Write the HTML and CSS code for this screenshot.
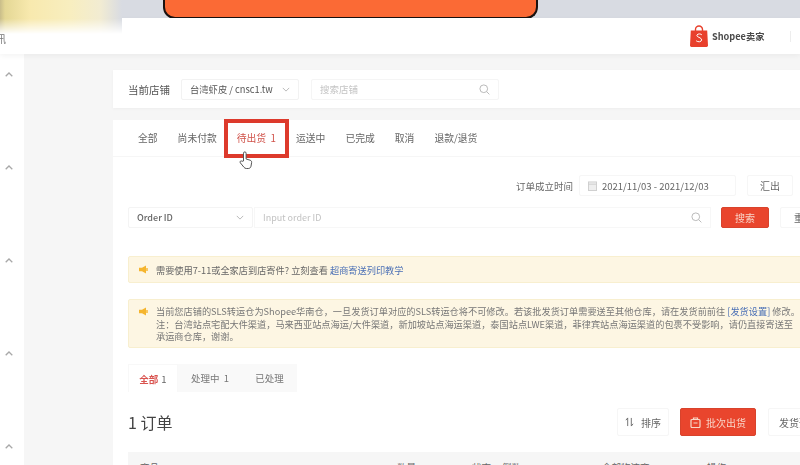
FILE: index.html
```html
<!DOCTYPE html>
<html lang="zh">
<head>
<meta charset="utf-8">
<title>Shopee卖家</title>
<link rel="stylesheet" href="styles.css">
</head>
<body>
<div class="page">
  <div class="top-strip"><div class="pill"></div></div>
  <div class="glow"></div>
  <header class="header">
    <span class="cut-label">讯</span>
    <div class="brand">
      <svg class="bag" viewBox="0 0 18 22"><path d="M5.500 6V4.500a3.500 3.500 0 0 1 7 0V6" fill="none" stroke="#e8402c" stroke-width="1.400"/><path d="M.8 5.500h16.400l.8 15a1.400 1.400 0 0 1-1.400 1.500H1.400A1.400 1.400 0 0 1 0 20.500z" fill="#e8402c"/><path d="M11.800 9.800C11 8.900 8 8.300 7 10c-1 2.300 4.800 2.300 4.600 5-.2 2.100-3.600 2.300-5.400.8" fill="none" stroke="#fff" stroke-width="1"/></svg>
      <span class="brand-name">Shopee卖家</span>
    </div>
    <span class="head-divider"></span>
  </header>
  <div class="body-row">
    <aside class="sidebar">
      <svg class="chev" viewBox="0 0 8 5"><path d="M.7 4.200 4 1l3.300 3.200" fill="none" stroke="#a8a8a8" stroke-width="1.300"/></svg>
      <svg class="chev" viewBox="0 0 8 5"><path d="M.7 4.200 4 1l3.300 3.200" fill="none" stroke="#a8a8a8" stroke-width="1.300"/></svg>
      <svg class="chev" viewBox="0 0 8 5"><path d="M.7 4.200 4 1l3.300 3.200" fill="none" stroke="#a8a8a8" stroke-width="1.300"/></svg>
      <svg class="chev" viewBox="0 0 8 5"><path d="M.7 4.200 4 1l3.300 3.200" fill="none" stroke="#a8a8a8" stroke-width="1.300"/></svg>
      <svg class="chev" viewBox="0 0 8 5"><path d="M.7 4.200 4 1l3.300 3.200" fill="none" stroke="#a8a8a8" stroke-width="1.300"/></svg>
    </aside>
    <main class="content">
      <section class="shop-card">
        <span class="shop-label">当前店铺</span>
        <div class="shop-select"><span>台湾虾皮 / cnsc1.tw</span>
          <svg class="caret" viewBox="0 0 10 6"><path d="M1 1l4 4 4-4" fill="none" stroke="#aaa" stroke-width="1"/></svg></div>
        <div class="shop-search"><span>搜索店铺</span>
          <svg class="search" viewBox="0 0 12 12"><circle cx="5.200" cy="5.200" r="4.200" fill="none" stroke="#b5b5b5" stroke-width="1"/><path d="M8.300 8.300l3 3" stroke="#b5b5b5" stroke-width="1"/></svg></div>
      </section>
      <section class="orders-card">
        <nav class="tabs">
          <span class="tab">全部</span>
          <span class="tab">尚未付款</span>
          <span class="tab tab-active">待出货&nbsp; 1</span>
          <span class="tab">运送中</span>
          <span class="tab">已完成</span>
          <span class="tab">取消</span>
          <span class="tab">退款/退货</span>
        </nav>
        <div class="date-row">
          <span class="date-label">订单成立时间</span>
          <div class="date-box">
            <svg class="cal" viewBox="0 0 10 11"><rect x=".5" y="1" width="9" height="9.500" fill="#eee" stroke="#ccc"/><path d="M.5 3.500h9" stroke="#ccc"/></svg>
            <span>2021/11/03 - 2021/12/03</span>
          </div>
          <button class="btn btn-export">汇出</button>
        </div>
        <div class="filter-row">
          <div class="id-select"><span>Order ID</span>
            <svg class="caret" viewBox="0 0 10 6"><path d="M1 1l4 4 4-4" fill="none" stroke="#aaa" stroke-width="1"/></svg></div>
          <div class="id-input"><span>Input order ID</span>
            <svg class="search" viewBox="0 0 12 12"><circle cx="5.200" cy="5.200" r="4.200" fill="none" stroke="#b5b5b5" stroke-width="1"/><path d="M8.300 8.300l3 3" stroke="#b5b5b5" stroke-width="1"/></svg></div>
          <button class="btn btn-primary btn-search">搜索</button>
          <button class="btn btn-reset">重置</button>
        </div>
        <div class="notice notice-short">
          <svg class="horn" viewBox="0 0 10 9"><path d="M0 2.800h3L7 .5v8L3 6.200H0z" fill="#f5b52e"/><path d="M8 3v3" stroke="#f5b52e" stroke-width="1.400"/></svg>
          <p>需要使用7-11或全家店到店寄件? 立刻查看 <a class="link">超商寄送列印教学</a></p>
        </div>
        <div class="notice notice-long">
          <svg class="horn" viewBox="0 0 10 9"><path d="M0 2.800h3L7 .5v8L3 6.200H0z" fill="#f5b52e"/><path d="M8 3v3" stroke="#f5b52e" stroke-width="1.400"/></svg>
          <p>当前您店铺的SLS转运仓为Shopee华南仓，一旦发货订单对应的SLS转运仓将不可修改。若该批发货订单需要送至其他仓库，请在发货前前往 <a class="link">[发货设置]</a> 修改。<br>注：台湾站点宅配大件渠道，马来西亚站点海运/大件渠道，新加坡站点海运渠道，泰国站点LWE渠道，菲律宾站点海运渠道的包裹不受影响，请仍直接寄送至<br>承运商仓库，谢谢。</p>
        </div>
        <div class="subtabs">
          <span class="subtab subtab-active"><b>全部</b> 1</span>
          <span class="subtab">处理中&nbsp; 1</span>
          <span class="subtab">已处理</span>
        </div>
        <div class="list-head">
          <h2 class="list-title">1 订单</h2>
          <button class="btn btn-sort">
            <svg class="sort" viewBox="0 0 10 11"><path d="M3 10V1L1 3.500M7 1v9l2-2.500" fill="none" stroke="#666" stroke-width="1"/></svg>排序</button>
          <button class="btn btn-primary btn-batch">
            <svg class="box" viewBox="0 0 11 11"><rect x="1" y="2.500" width="9" height="8" rx="1" fill="none" stroke="#f8d9c8" stroke-width="1.200"/><path d="M3.500 2.500V1h4v1.500M3.500 6h4" stroke="#f8d9c8" stroke-width="1.200" fill="none"/></svg>批次出货</button>
          <button class="btn btn-pre">发货预报</button>
        </div>
        <div class="table-head">
          <span class="th th-goods">商品</span>
          <span class="th th-qty">数量</span>
          <span class="th th-status">状态</span>
          <span class="th th-count">倒数</span>
          <span class="th th-carrier">全部物流商 ⌄</span>
          <span class="th th-op">操作</span>
        </div>
      </section>
    </main>
  </div>
  <div class="highlight"></div>
  <svg class="hand" viewBox="0 0 14 19"><path d="M4.500 10V2.200a1.300 1.300 0 0 1 2.600 0V8l4 1.200c1.200.4 1.700 1.300 1.500 2.500l-.6 3.500c-.2 1.300-1.200 2.300-2.700 2.300H7.300c-1 0-1.800-.5-2.400-1.300L1.300 11.800c-.9-1.300.7-2.600 1.800-1.500z" fill="#fff" stroke="#555" stroke-width="1"/></svg>
</div>
</body>
</html>
```
FILE: styles.css
```css
* { box-sizing: border-box; }
html, body { margin: 0; height: 100%; overflow: hidden; background: #f6f6f6; }
body { font-family: "Noto Sans CJK SC", "Liberation Sans", sans-serif; font-size: 10px; color: #666; }
.page { position: relative; width: 800px; height: 465px; overflow: hidden; filter: blur(.7px); }

.top-strip { height: 18px; background: #d8dbe2; display: flex; padding-left: 163px; }
.pill { width: 375px; height: 19px; background: #fb6a35; border: 2px solid #1a1210; border-top: 0; border-radius: 0 0 12px 12px; }
.glow { position: absolute; left: 0; top: 0; width: 122px; height: 34px;
  background: linear-gradient(90deg, #c9bd8a 0, #e4d795 5px, #f8e9ae 30px, #f8eebf 70px, #f2ecd2 100px, #d8dbe2 122px);
  -webkit-mask-image: linear-gradient(180deg, #000 55%, transparent); mask-image: linear-gradient(180deg, #000 55%, transparent); z-index: 2; }

.header { height: 36px; background: #fff; display: flex; align-items: center; justify-content: flex-end; padding-right: 9px; position: relative; box-shadow: 0 2px 6px rgba(0,0,0,.05); z-index: 1; }
.cut-label { margin-right: auto; margin-left: -4px; margin-top: 4px; font-size: 10px; color: #777; }
.brand { display: flex; align-items: center; gap: 4px; }
.bag { width: 18px; height: 22px; }
.brand-name { font-size: 9.200px; font-weight: 700; color: #4a4a4a; width: 52px; white-space: nowrap; }
.head-divider { width: 1px; height: 11px; background: #ededed; margin-left: 26px; }

.body-row { display: flex; height: 411px; }
.sidebar { width: 24px; flex: none; background: #fff; display: flex; flex-direction: column; align-items: center; gap: 88px; padding: 18px 6px 0 0; }
.chev { width: 8px; height: 5px; flex: none; }
.content { width: 776px; flex: none; padding: 16px 0 0 89px; }

.shop-card { height: 38px; background: #fff; display: flex; align-items: center; padding-left: 15px; box-shadow: 0 1px 3px rgba(0,0,0,.04); width: 760px; }
.shop-label { font-size: 10.500px; color: #555; width: 53px; }
.shop-select { width: 118px; height: 21px; border: 1px solid #f2f2f2; border-radius: 2px; display: flex; align-items: center; justify-content: space-between; padding: 0 8px; font-size: 9.300px; color: #555; white-space: nowrap; }
.shop-search { width: 188px; height: 21px; margin-left: 12px; border: 1px solid #f5f5f5; border-radius: 2px; display: flex; align-items: center; justify-content: space-between; padding: 0 8px; color: #c4c4c4; font-size: 9.500px; }
.caret { width: 8px; height: 5px; }
.search { width: 11px; height: 11px; flex: none; }

.orders-card { margin-top: 12px; width: 760px; height: 345px; background: #fff; }
.tabs { height: 37px; display: flex; align-items: center; gap: 20px; padding-left: 25px; border-bottom: 1px solid #f6f6f6; }
.tab { font-size: 9.800px; color: #666; white-space: nowrap; }
.tab-active { color: #d0524a; }

.date-row { display: flex; align-items: center; margin-top: 18px; padding-left: 403px; height: 21px; }
.date-label { width: 63px; font-size: 9.500px; color: #666; white-space: nowrap; }
.date-box { width: 157px; height: 21px; border: 1px solid #f6f6f6; border-radius: 2px; display: flex; align-items: center; gap: 5px; padding-left: 8px; font-size: 9.500px; color: #666; white-space: nowrap; }
.cal { width: 9px; height: 10px; }
.btn { font: inherit; font-size: 10px; border: 1px solid #f6f6f6; border-radius: 2px; background: #fff; color: #666; padding: 0; height: 21px; white-space: nowrap; display: flex; align-items: center; justify-content: center; }
.btn-export { width: 46px; margin-left: 11px; }
.filter-row { display: flex; align-items: center; margin-top: 11px; padding-left: 15px; height: 21px; }
.id-select { width: 125px; height: 21px; border: 1px solid #f4f4f4; border-radius: 2px; display: flex; align-items: center; justify-content: space-between; padding: 0 8px; font-size: 9px; font-weight: 500; color: #666; }
.id-input { width: 457px; height: 21px; margin-left: 1px; border: 1px solid #f7f7f7; display: flex; align-items: center; justify-content: space-between; padding: 0 8px; color: #c2c2c2; font-size: 9px; }
.btn-primary { background: #e9452d; border-color: #d8432c; color: #f8d3c6; }
.btn-search { width: 48px; margin-left: 10px; }
.btn-reset { width: 48px; margin-left: 11px; justify-content: flex-start; padding-left: 13px; }

.notice { margin: 0 0 0 15px; width: 720px; background: #fdf6e3; border: 1px solid #f8efcf; border-radius: 2px; display: flex; align-items: flex-start; padding-left: 10px; color: #666; }
.notice p { margin: 0; white-space: nowrap; font-size: 9.200px; }
.horn { width: 10px; height: 9px; flex: none; margin-right: 7px; }
.link { color: #4a6fb5; }
.notice-short { margin-top: 28px; height: 27px; align-items: center; }
.notice-long { margin-top: 16px; height: 49px; padding-top: 5px; }
.notice-long p { line-height: 12.500px; font-size: 9.200px; color: #777; }
.notice-long .horn { margin-top: 2px; }

.subtabs { display: flex; margin: 16px 0 0 15px; height: 28px; }
.subtab { display: flex; align-items: center; justify-content: center; gap: 3px; width: 64px; background: #f9f9f9; font-size: 9.500px; color: #777; }
.subtab-active { width: 50px; background: #fff; border: 1px solid #f8f8f8; border-bottom: 0; color: #666; }
.subtab-active b { color: #d9534f; font-weight: 700; }
.subtab:last-child { width: 55px; }

.list-head { display: flex; align-items: center; margin-top: 16px; padding-left: 15px; height: 28px; }
.list-title { margin: 0; font-size: 16px; line-height: 28px; font-weight: 400; color: #444; width: 489px; }
.btn-sort { width: 52px; height: 28px; gap: 7px; }
.sort { width: 9px; height: 10px; }
.btn-batch { width: 76px; height: 28px; margin-left: 11px; gap: 5px; }
.box { width: 11px; height: 11px; }
.btn-pre { width: 70px; height: 28px; margin-left: 12px; justify-content: flex-start; padding-left: 10px; }

.table-head { margin: 16px 0 0 15px; height: 30px; background: #f6f6f6; position: relative; display: flex; padding-top: 8px; font-size: 9.500px; color: #666; }
.th { white-space: nowrap; }
.th-goods { margin-left: 12px; width: 257px; }
.th-qty { width: 75px; }
.th-status { width: 30px; }
.th-count { width: 100px; }
.th-carrier { width: 105px; }

.highlight { position: absolute; left: 224px; top: 119px; width: 65px; height: 39px; border: 4px solid #dd3a2c; }
.hand { position: absolute; left: 239px; top: 151px; width: 14px; height: 19px; }
```
